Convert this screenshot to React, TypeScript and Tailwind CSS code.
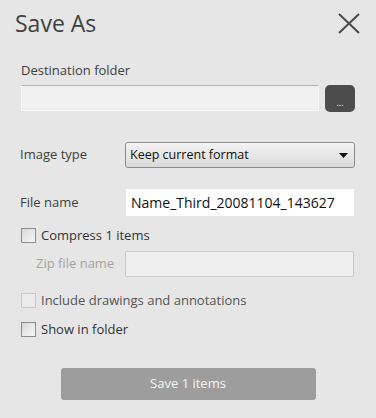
import React from "react";

function CheckRow({ label, disabled }: { label: string; disabled?: boolean }) {
  return (
    <div className="flex items-center h-[15px] gap-[5px]">
      <span
        className={
          disabled
            ? "w-[15px] h-[15px] border border-[#c9c9c9] bg-[#ececec]"
            : "w-[15px] h-[15px] border border-[#8c8c8c] bg-gradient-to-br from-[#d9d9d9] to-[#f7f7f7]"
        }
      />
      <span className={"text-[13px] leading-[15px] " + (disabled ? "text-[#555555]" : "text-[#333333]")}>{label}</span>
    </div>
  );
}

export default function App() {
  return (
    <div className="w-[376px] h-[418px] bg-[#e6e6e6] overflow-hidden font-['Open_Sans',sans-serif]">
      {/* Header */}
      <div className="flex items-start justify-between pl-[15px] pr-[16px] pt-[7px]">
        <h1 className="text-[23px] leading-[32px] text-[#404040]">Save As</h1>
        <svg width="22" height="21" viewBox="0 0 22 21" className="mt-[6px]">
          <path d="M1 1 L21 20 M21 1 L1 20" stroke="#4a4a4a" strokeWidth="2" fill="none" />
        </svg>
      </div>

      <div className="px-[21px]">
        {/* Destination folder */}
        <div className="mt-[22px] text-[13px] leading-[18px] text-[#404040]">Destination folder</div>
        <div className="mt-[6px] flex items-start gap-[6px]">
          <div className="flex-1 h-[26px] bg-[#f0f0f0] border border-[#f8f8f8] border-t-[#b4b4b4]" />
          <button className="w-[30px] h-[27px] rounded-[5px] bg-[#4c4c4c] text-white text-[9px] leading-none pt-[8px]">
            ...
          </button>
        </div>

        {/* Image type */}
        <div className="mt-[30px] flex items-center -ml-px">
          <span className="w-[105px] text-[13px] text-[#404040]">Image type</span>
          <div className="flex-1 h-[26px] flex items-center justify-between pl-[4px] pr-[6px] rounded-[3px] border border-[#8c8c8c] bg-gradient-to-b from-[#f4f4f4] to-[#dadada]">
            <span className="text-[12.5px] text-[#111111]">Keep current format</span>
            <svg width="9" height="5" viewBox="0 0 9 5">
              <path d="M0 0 H9 L4.5 5 Z" fill="#111111" />
            </svg>
          </div>
        </div>

        {/* File name */}
        <div className="mt-[21px] flex items-center -ml-px">
          <span className="w-[106px] text-[13px] text-[#404040]">File name</span>
          <div className="flex-1 h-[27px] mr-px bg-white flex items-center pl-[5px]">
            <span className="text-[14px] text-[#111111]">Name_Third_20081104_143627</span>
          </div>
        </div>

        {/* Compress */}
        <div className="mt-[12px]">
          <CheckRow label="Compress 1 items" />
        </div>
        <div className="mt-[8px] flex items-center pl-[15px]">
          <span className="w-[89px] text-[13px] text-[#a3a3a3]">Zip file name</span>
          <div className="flex-1 h-[26px] mr-px rounded-[2px] bg-[#efefef] border border-[#c9c9c9]" />
        </div>

        <div className="mt-[16px]">
          <CheckRow label="Include drawings and annotations" disabled />
        </div>
        <div className="mt-[14px]">
          <CheckRow label="Show in folder" />
        </div>
      </div>

      {/* Save button */}
      <div className="mt-[31px] flex justify-center">
        <button className="w-[255px] h-[32px] rounded-[3px] bg-[#9d9d9d] text-[13px] text-[#f5f5f5]">Save 1 items</button>
      </div>
    </div>
  );
}
